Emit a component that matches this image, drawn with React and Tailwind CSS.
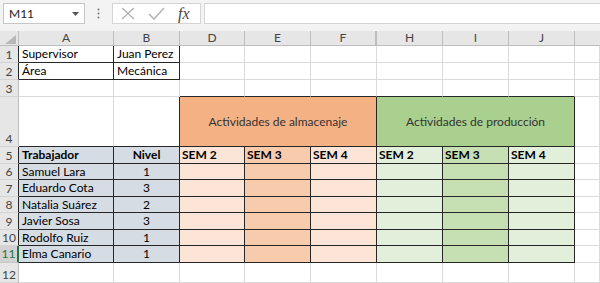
import React from "react";

const GRID = "border-[#dadada]";
const DARK = "border-[#262626]";

const W = {
  rh: "w-[19px]",
  A: "w-[95px]",
  B: "w-[66px]",
  D: "w-[65px]",
  C: "w-[66px]",
  K: "flex-1",
};

const orange = "bg-[#fce4d6]";
const orangeDark = "bg-[#f8cbad]";
const green = "bg-[#e2efda]";
const greenDark = "bg-[#c6e0b4]";

const workers = [
  { name: "Samuel Lara", level: 1, h: "h-[16px]" },
  { name: "Eduardo Cota", level: 3, h: "h-[17px]" },
  { name: "Natalia Suárez", level: 2, h: "h-[16px]" },
  { name: "Javier Sosa", level: 3, h: "h-[17px]" },
  { name: "Rodolfo Ruiz", level: 1, h: "h-[16px]" },
  { name: "Elma Canario", level: 1, h: "h-[17px]", selected: true },
];

function Cell({ w, className = "", children }) {
  return (
    <div className={`shrink-0 flex overflow-hidden whitespace-nowrap border-r border-b ${w} ${className}`}>
      {children}
    </div>
  );
}

function RowHead({ n, dark, selected }) {
  if (selected) {
    return (
      <div className="shrink-0 w-[19px] flex items-center justify-center bg-[#d2d2d2] border-b border-[#c8c8c8] border-r-2 border-r-[#217346] text-[#217346] text-[12px]">
        {n}
      </div>
    );
  }
  return (
    <div
      className={`shrink-0 w-[19px] flex items-end justify-center pb-[1px] bg-[#e6e6e6] border-b border-b-[#d4d4d4] border-r text-[#444] text-[12px] ${
        dark ? "border-r-[#262626]" : "border-r-[#bdbdbd]"
      }`}
    >
      {n}
    </div>
  );
}

function EmptyRight() {
  return <Cell w={W.K} className={GRID} />;
}

function Toolbar() {
  return (
    <div className="h-[31px] bg-[#f3f3f3] flex items-start pt-[3px] pl-[3px]">
      <div className="w-[82px] h-[21px] bg-white border border-[#c6c6c6] flex items-center justify-between pl-[5px] pr-[5px] text-[12px] text-[#222]">
        <span>M11</span>
        <svg width="7" height="4" viewBox="0 0 7 4">
          <path d="M0 0 L7 0 L3.5 4 Z" fill="#555" />
        </svg>
      </div>
      <div className="w-[27px] h-[21px] flex items-center justify-center">
        <svg width="3" height="11" viewBox="0 0 3 11">
          <circle cx="1.5" cy="1.5" r="1" fill="#777" />
          <circle cx="1.5" cy="5.5" r="1" fill="#777" />
          <circle cx="1.5" cy="9.5" r="1" fill="#777" />
        </svg>
      </div>
      <div className="w-[89px] h-[21px] bg-white border border-[#d4d4d4] flex items-center pl-[8px] gap-[13px]">
        <svg width="14" height="13" viewBox="0 0 14 13">
          <path d="M1 1 L13 12 M13 1 L1 12" stroke="#b4b4b4" strokeWidth="1.4" />
        </svg>
        <svg width="17" height="13" viewBox="0 0 17 13">
          <path d="M1 7 L6 12 L16 1" stroke="#b4b4b4" strokeWidth="1.6" fill="none" />
        </svg>
        <span className="font-['Liberation_Serif',serif] italic text-[16px] leading-none text-[#444]">
          fx
        </span>
      </div>
      <div className="ml-[3px] flex-1 h-[21px] bg-white border border-[#d4d4d4] border-r-0" />
    </div>
  );
}

function ColumnHeader() {
  const letters = [
    ["A", W.A],
    ["B", W.B],
    ["D", W.D],
    ["E", W.C],
    ["F", W.C],
    ["H", W.C],
    ["I", W.C],
    ["J", W.C],
  ];
  return (
    <div className="flex h-[15px] bg-[#e6e6e6] text-[12px] text-[#444]">
      <div className="shrink-0 w-[19px] border-r border-b border-[#bdbdbd] relative">
        <svg className="absolute right-[2px] bottom-[1px]" width="11" height="9" viewBox="0 0 11 9">
          <path d="M11 0 L11 9 L0 9 Z" fill="#b8b8b8" />
        </svg>
      </div>
      {letters.map(([l, w]) => (
        <div
          key={l}
          className={`shrink-0 flex items-center justify-center border-r border-b border-[#bdbdbd] ${w} ${
            l === "F" ? "border-r-2" : ""
          }`}
        >
          {l}
        </div>
      ))}
      <div className="flex-1 border-b border-[#bdbdbd]" />
    </div>
  );
}

function InfoRow({ n, label, value }) {
  return (
    <div className="flex h-[17px]">
      <RowHead n={n} dark />
      <Cell w={W.A} className={`${DARK} items-center pl-[3px]`}>
        {label}
      </Cell>
      <Cell w={W.B} className={`${DARK} items-center pl-[3px]`}>
        {value}
      </Cell>
      <Cell w={W.D} className={GRID} />
      <Cell w={W.C} className={GRID} />
      <Cell w={W.C} className={GRID} />
      <Cell w={W.C} className={GRID} />
      <Cell w={W.C} className={GRID} />
      <Cell w={W.C} className={GRID} />
      <EmptyRight />
    </div>
  );
}

function WeekCells({ labels }) {
  const cols = [
    [W.D, orange],
    [W.C, orangeDark],
    [W.C, orange],
    [W.C, green],
    [W.C, greenDark],
    [W.C, green],
  ];
  const names = ["SEM 2", "SEM 3", "SEM 4", "SEM 2", "SEM 3", "SEM 4"];
  return cols.map(([w, bg], i) => (
    <Cell key={i} w={w} className={`${DARK} ${bg} items-center pl-[2px] font-bold`}>
      {labels ? names[i] : null}
    </Cell>
  ));
}

export default function App() {
  return (
    <div className="w-[600px] h-[283px] overflow-hidden bg-white font-['Lato',sans-serif] text-[12px] text-black leading-none">
      <Toolbar />
      <ColumnHeader />
      <InfoRow n="1" label="Supervisor" value="Juan Perez" />
      <InfoRow n="2" label="Área" value="Mecánica" />

      <div className="flex h-[17px]">
        <RowHead n="3" />
        <Cell w={W.A} className={GRID} />
        <Cell w={W.B} className={GRID} />
        <Cell w={W.D} className={`border-r-[#dadada] border-b-[#262626]`} />
        <Cell w={W.C} className={`border-r-[#dadada] border-b-[#262626]`} />
        <Cell w={W.C} className={`border-r-[#dadada] border-b-[#262626]`} />
        <Cell w={W.C} className={`border-r-[#dadada] border-b-[#262626]`} />
        <Cell w={W.C} className={`border-r-[#dadada] border-b-[#262626]`} />
        <Cell w={W.C} className={`border-r-[#dadada] border-b-[#262626]`} />
        <EmptyRight />
      </div>

      <div className="flex h-[50px]">
        <RowHead n="4" />
        <Cell w={W.A} className="border-r-[#dadada] border-b-[#262626]" />
        <Cell w={W.B} className={DARK} />
        <Cell
          w="w-[197px]"
          className={`${DARK} bg-[#f4b183] items-center justify-center text-[#333]`}
        >
          Actividades de almacenaje
        </Cell>
        <Cell
          w="w-[198px]"
          className={`${DARK} bg-[#a9d08e] items-center justify-center text-[#333]`}
        >
          Actividades de producción
        </Cell>
        <EmptyRight />
      </div>

      <div className="flex h-[17px]">
        <RowHead n="5" dark />
        <Cell w={W.A} className={`${DARK} bg-[#d6dce4] items-center pl-[3px] font-bold`}>
          Trabajador
        </Cell>
        <Cell w={W.B} className={`${DARK} bg-[#d6dce4] items-center justify-center font-bold`}>
          Nivel
        </Cell>
        <WeekCells labels />
        <EmptyRight />
      </div>

      {workers.map((wk, i) => (
        <div key={wk.name} className={`flex ${wk.h}`}>
          <RowHead n={String(i + 6)} dark selected={wk.selected} />
          <Cell w={W.A} className={`${DARK} bg-[#d6dce4] items-center pl-[3px]`}>
            {wk.name}
          </Cell>
          <Cell w={W.B} className={`${DARK} bg-[#d6dce4] items-center justify-center`}>
            {wk.level}
          </Cell>
          <WeekCells />
          <EmptyRight />
        </div>
      ))}

      <div className="flex h-[20px]">
        <RowHead n="12" />
        <Cell w={W.A} className={GRID} />
        <Cell w={W.B} className={GRID} />
        <Cell w={W.D} className={GRID} />
        <Cell w={W.C} className={GRID} />
        <Cell w={W.C} className={GRID} />
        <Cell w={W.C} className={GRID} />
        <Cell w={W.C} className={GRID} />
        <Cell w={W.C} className={GRID} />
        <EmptyRight />
      </div>
    </div>
  );
}
